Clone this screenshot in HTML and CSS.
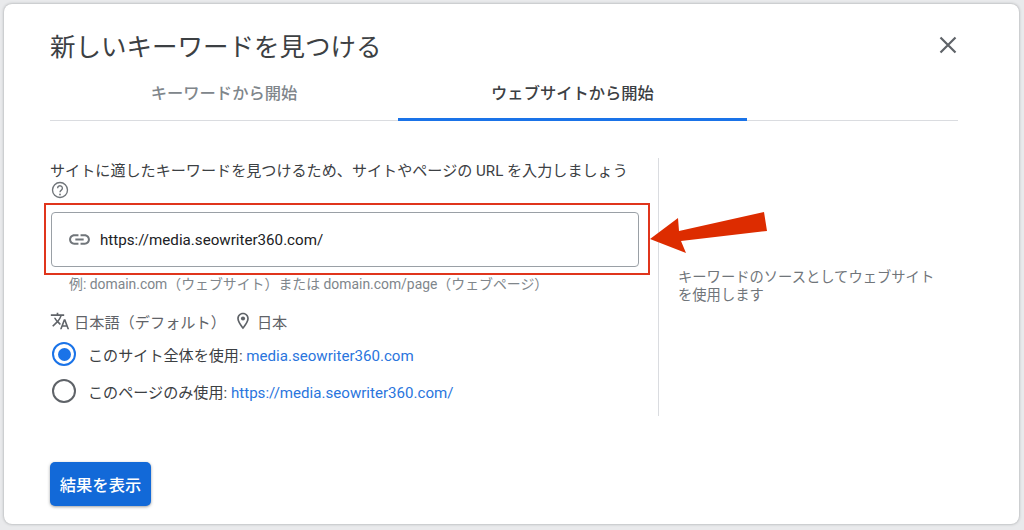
FILE: index.html
```html
<!DOCTYPE html>
<html lang="ja">
<head>
<meta charset="utf-8">
<title>新しいキーワードを見つける</title>
<link rel="stylesheet" href="styles.css">
</head>
<body>
<main class="dialog">
  <header class="head">
    <h1 class="title">新しいキーワードを見つける</h1>
    <svg class="close" viewBox="0 0 24 24" aria-label="閉じる"><path d="M4.5 4.5l15 15M19.5 4.5l-15 15"/></svg>
  </header>
  <nav class="tabs">
    <div class="tab">キーワードから開始</div>
    <div class="tab tab-active">ウェブサイトから開始</div>
  </nav>
  <section class="body">
    <div class="left">
      <p class="label">サイトに適したキーワードを見つけるため、サイトやページの URL を入力しましょう</p>
      <svg class="help" viewBox="0 0 24 24"><circle cx="12" cy="12" r="10"/><path d="M8.8 9.6a3.2 3.2 0 1 1 5 2.6c-1.1.8-1.8 1.4-1.8 2.8"/><circle class="dot" cx="12" cy="18" r="1.2"/></svg>
      <div class="redbox">
        <div class="field">
          <svg class="link" viewBox="0 0 24 24"><path d="M3.9 12c0-1.71 1.39-3.1 3.1-3.1h4V7H7c-2.76 0-5 2.24-5 5s2.24 5 5 5h4v-1.900H7c-1.71 0-3.100-1.390-3.100-3.100zM8 13h8v-2H8v2zm9-6h-4v1.900h4c1.710 0 3.100 1.390 3.100 3.100s-1.390 3.100-3.100 3.100h-4V17h4c2.760 0 5-2.240 5-5s-2.240-5-5-5z"/></svg>
          <span class="url">https://media.seowriter360.com/</span>
        </div>
      </div>
      <p class="hint">例: domain.com（ウェブサイト）または domain.com/page（ウェブページ）</p>
      <div class="locale">
        <svg class="lic" viewBox="0 0 24 24"><path d="M12.870 15.070l-2.540-2.510.030-.030c1.740-1.940 2.980-4.170 3.710-6.530H17V4h-7V2H8v2H1v1.990h11.170C11.500 7.920 10.440 9.750 9 11.350 8.070 10.320 7.300 9.190 6.690 8h-2c.730 1.630 1.730 3.170 2.980 4.560l-5.090 5.020L4 19l5-5 3.110 3.110.760-2.040zM18.500 10h-2L12 22h2l1.120-3h4.750L21 22h2l-4.500-12zm-2.620 7l1.620-4.330L19.120 17h-3.240z"/></svg>
        <span>日本語（デフォルト）</span>
        <svg class="lic pin" viewBox="0 0 24 24"><path d="M12 2C8.130 2 5 5.130 5 9c0 5.250 7 13 7 13s7-7.750 7-13c0-3.870-3.130-7-7-7zM7 9c0-2.760 2.240-5 5-5s5 2.240 5 5c0 2.880-2.880 7.190-5 9.880C9.920 16.210 7 11.850 7 9z"/><circle cx="12" cy="9" r="2.500"/></svg>
        <span>日本</span>
      </div>
      <div class="radio-row">
        <span class="radio radio-on"></span>
        <span>このサイト全体を使用: <span class="blue">media.seowriter360.com</span></span>
      </div>
      <div class="radio-row">
        <span class="radio"></span>
        <span>このページのみ使用: <span class="blue">https://media.seowriter360.com/</span></span>
      </div>
    </div>
    <aside class="right">キーワードのソースとしてウェブサイトを使用します</aside>
  </section>
  <div class="foot"><button class="btn">結果を表示</button></div>
  <svg class="arrow" viewBox="0 0 120 44"><polygon points="0,28 28,7 29,20 114,1 117,20 31,30 36,42"/></svg>
</main>
</body>
</html>
```
FILE: styles.css
```css
* { box-sizing: border-box; }
html, body { margin: 0; height: 100%; }
body {
  background: #e9eaec;
  padding: 4px 5px 6px 4px;
  font-family: Roboto, "Noto Sans CJK JP", sans-serif;
  color: #3c4043;
  overflow: hidden;
}
.dialog {
  position: relative;
  height: 520px;
  background: #fff;
  border-radius: 8px;
  padding: 0 61px 0 46px;
  box-shadow: 0 0 3px rgba(60,64,67,.45);
}
.head {
  display: flex;
  justify-content: space-between;
  align-items: center;
  padding-top: 25px;
  height: 61px;
}
.title {
  margin: 0;
  font-size: 25.500px;
  font-weight: 400;
  line-height: 36px;
  color: #3c4043;
}
.close {
  width: 24px;
  height: 24px;
  margin: -4px -2px 0 0;
  fill: none;
  stroke: #5f6368;
  stroke-width: 2.200;
}
.tabs {
  display: flex;
  height: 56px;
  border-bottom: 1px solid #dadce0;
}
.tab {
  width: 348px;
  height: 56px;
  padding-top: 18px;
  text-align: center;
  font-size: 16.300px;
  line-height: 22px;
  font-weight: 500;
  color: #80868b;
}
.tab-active {
  width: 349px;
  color: #3c4043;
  border-bottom: 3px solid #1a73e8;
}
.body {
  display: flex;
  margin-top: 37px;
  height: 258px;
}
.left {
  width: 609px;
  padding-right: 20px;
  border-right: 1px solid #dadce0;
}
.label {
  margin: 2px 0 0;
  font-size: 15.100px;
  line-height: 22px;
  color: #3c4043;
  white-space: nowrap;
}
.help {
  display: block;
  width: 18px;
  height: 18px;
  margin: -1px 0 0 1px;
  fill: none;
  stroke: #70757a;
  stroke-width: 1.800;
}
.help .dot { fill: #70757a; stroke: none; }
.redbox {
  width: 606px;
  height: 72px;
  margin: 4px 0 0 -6px;
  padding: 7px 9px 7px 5px;
  border: 2px solid #e0351c;
}
.field {
  display: flex;
  align-items: center;
  gap: 8px;
  height: 55px;
  padding-left: 15px;
  border: 1px solid #9aa0a6;
  border-radius: 4px;
}
.link { width: 25px; height: 25px; fill: #70757a; flex: none; }
.url { font-size: 15.150px; color: #202124; }
.hint {
  margin: 0 0 0 19px;
  font-size: 13.900px;
  line-height: 18px;
  height: 18px;
  color: #80868b;
  white-space: nowrap;
}
.locale {
  display: flex;
  align-items: center;
  margin-top: 17px;
  height: 22px;
  font-size: 15.200px;
  color: #5f6368;
}
.lic { width: 20px; height: 20px; fill: #5f6368; flex: none; margin-right: 4px; }
.pin { margin-left: 7px; margin-right: 4px; }
.radio-row {
  display: flex;
  align-items: center;
  gap: 12px;
  height: 24px;
  margin-top: 11px;
  margin-left: 2px;
  font-size: 15.100px;
  color: #3c4043;
  white-space: nowrap;
}
.locale + .radio-row { margin-top: 10px; }
.radio-row + .radio-row { margin-top: 13px; }
.radio {
  position: relative;
  width: 24px;
  height: 24px;
  border: 2.500px solid #5f6368;
  border-radius: 50%;
  flex: none;
}
.radio-on { border-color: #1a73e8; }
.radio-on::after {
  content: "";
  position: absolute;
  inset: 3.500px;
  background: #1a73e8;
  border-radius: 50%;
}
.blue { color: #2a75dd; }
.right {
  flex: none;
  width: 281px;
  padding: 110px 0 0 19px;
  font-size: 14.300px;
  line-height: 18px;
  color: #70757a;
}
.foot { margin-top: 46px; }
.btn {
  display: block;
  width: 101px;
  height: 44px;
  border: 0;
  border-radius: 5px;
  background: #1269d8;
  color: #fff;
  font: 500 16.300px Roboto, "Noto Sans CJK JP", sans-serif;
  box-shadow: 0 1px 3px rgba(60,64,67,.5);
}
.arrow {
  position: absolute;
  left: 646px;
  top: 207px;
  width: 120px;
  height: 44px;
  fill: #dd2c00;
}
```
